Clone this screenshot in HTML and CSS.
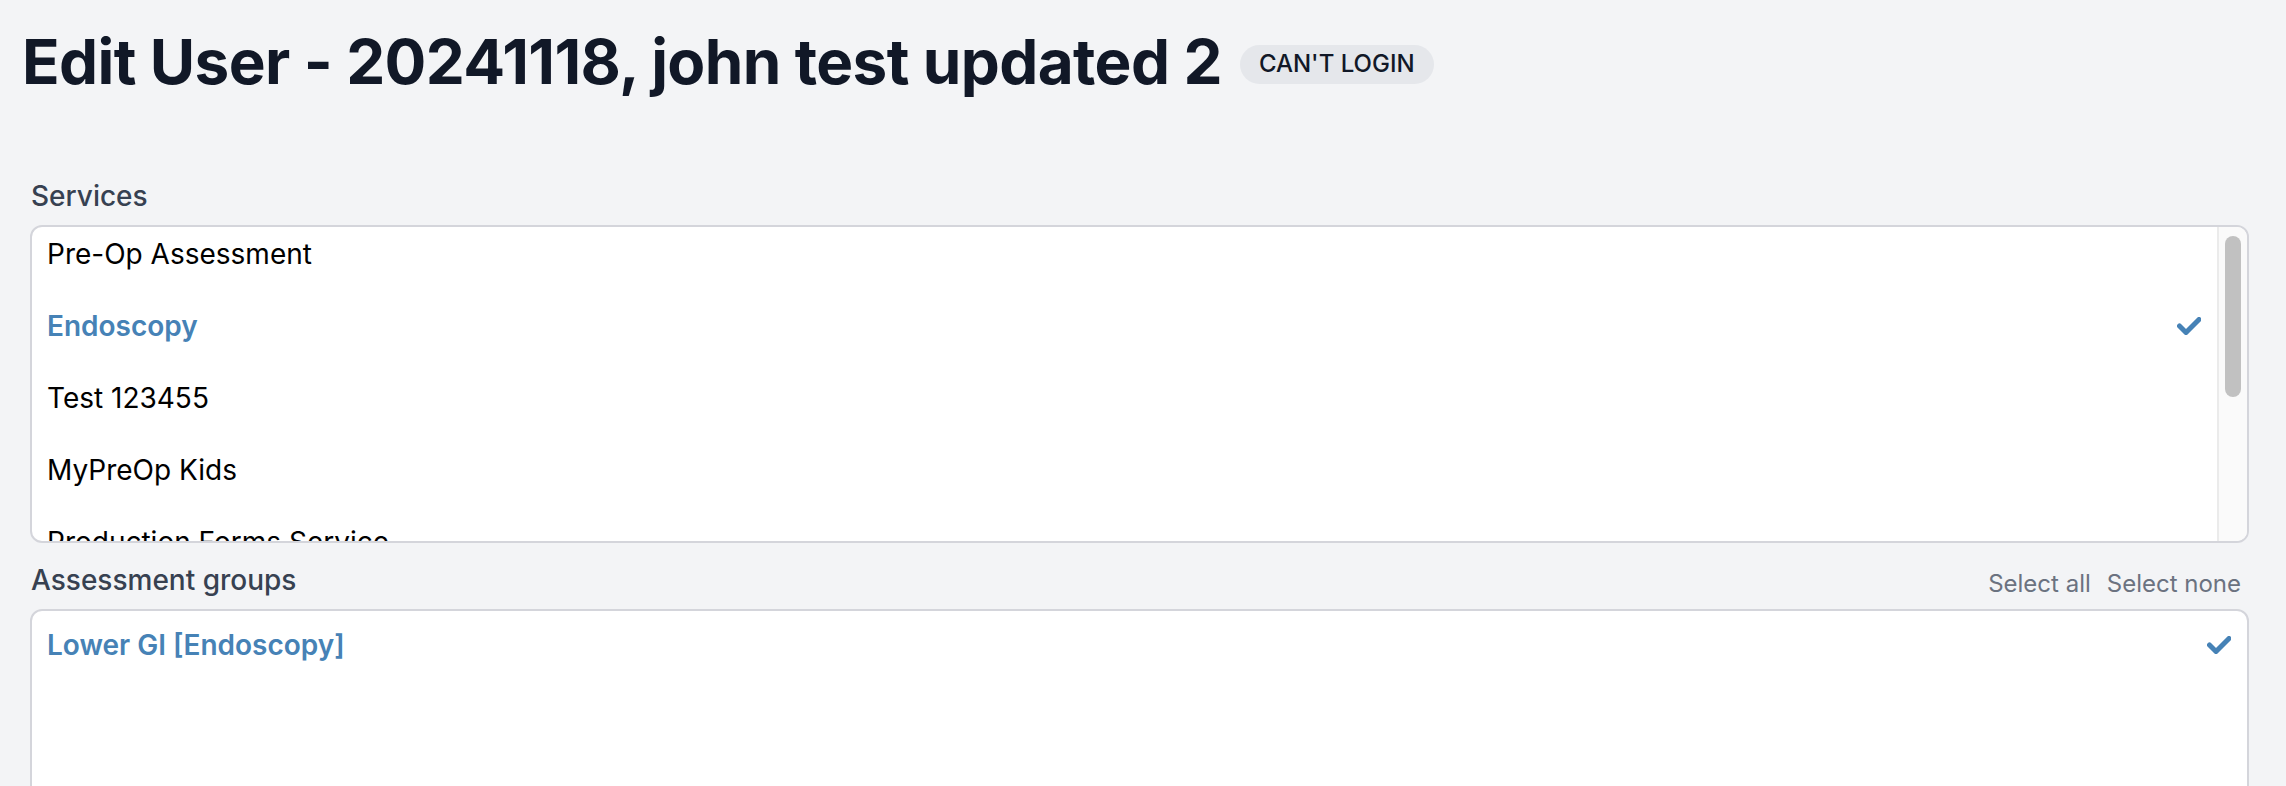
FILE: index.html
```html
<!DOCTYPE html>
<html lang="en">
<head>
  <meta charset="UTF-8">
  <meta name="viewport" content="width=device-width, initial-scale=1.0">
  <title>Edit User</title>
  <link rel="stylesheet" href="styles.css">
</head>
<body>
  <header class="title-row">
    <h1>Edit User - 20241118, john test updated 2</h1>
    <span class="badge">CAN'T LOGIN</span>
  </header>

  <main class="form">
    <div class="field">
      <div class="field-head">
        <label>Services</label>
      </div>
      <div class="listbox">
        <div class="options scrolled">
          <div class="option">Pre-Op Assessment</div>
          <div class="option selected">Endoscopy
            <svg class="check" viewBox="0 0 24.5 18"><polyline points="2.5,9 9,15.5 22,2.5"/></svg>
          </div>
          <div class="option">Test 123455</div>
          <div class="option">MyPreOp Kids</div>
          <div class="option">Production Forms Service</div>
        </div>
        <div class="track"><div class="thumb"></div></div>
      </div>
    </div>

    <div class="field">
      <div class="field-head">
        <label>Assessment groups</label>
        <div class="links">
          <button>Select all</button>
          <button>Select none</button>
        </div>
      </div>
      <div class="listbox tall">
        <div class="options">
          <div class="option selected">Lower GI [Endoscopy]
            <svg class="check" viewBox="0 0 24.5 18"><polyline points="2.5,9 9,15.5 22,2.5"/></svg>
          </div>
        </div>
      </div>
    </div>
  </main>
</body>
</html>
```

FILE: styles.css
```css
body { margin: 0; background: #f3f4f6; font-family: Inter, "Liberation Sans", sans-serif; color: #000; }

.title-row { display: flex; align-items: center; padding: 26px 0 0 22px; }
h1 { margin: 0; font-size: 62px; line-height: 72px; font-weight: 700; color: #111827; letter-spacing: -0.01em; }
.badge { margin: 5px 0 0 18px; padding: 3px 19px 4px; line-height: 32px; font-size: 24px; font-weight: 500; color: #111827; background: #e5e7eb; border-radius: 999px; }

.form { padding: 78px 37px 0 30px; }
.field + .field { margin-top: 17px; }
.field-head { display: flex; justify-content: space-between; align-items: flex-end; margin-bottom: 9px; }
label { font-size: 28px; line-height: 40px; font-weight: 500; color: #374151; padding-left: 1px; }
.links { display: flex; }
.links button { background: none; border: none; padding: 0 8px; font-family: inherit; font-size: 24px; line-height: 32px; color: #6b7280; cursor: pointer; }

.listbox { display: flex; height: 318px; box-sizing: border-box; background: #fff; border: 2px solid #d4d5db; border-radius: 12px; overflow: hidden; }
.listbox.tall { height: 420px; }
.options { flex: 1; }
.options.scrolled { margin-top: -7px; }
.option { display: flex; justify-content: space-between; align-items: center; padding: 14px 16px 18px 15px; font-size: 28px; line-height: 40px; white-space: nowrap; }
.option.selected { color: #4682b6; font-weight: 600; }
.check { width: 24.5px; height: 18px; fill: none; stroke: #4682b6; stroke-width: 5; stroke-linecap: round; stroke-linejoin: round; }

.track { width: 28px; background: #fafafa; border-left: 2px solid #ebebeb; }
.thumb { width: 16px; height: 161px; margin: 9px 0 0 6px; background: #c1c1c1; border-radius: 8px; }
```
